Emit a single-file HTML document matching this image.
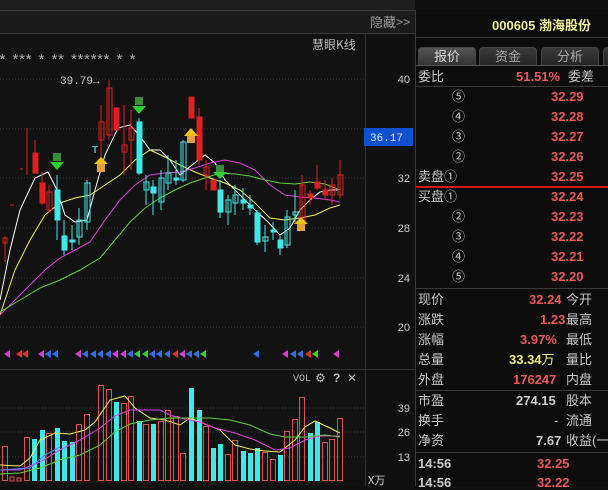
<!DOCTYPE html>
<html><head><meta charset="utf-8"><style>
*{margin:0;padding:0;box-sizing:border-box}
body{width:608px;height:486px;background:#101010;overflow:hidden;position:relative;font-family:"Liberation Sans","Noto Sans CJK SC",sans-serif;}
#chart{position:absolute;left:0;top:0}
#rp{position:absolute;left:415px;top:10px;width:193px;height:476px;background:#0c0c0c;border-left:1px solid #3a3a3a}
.t{position:absolute;font-size:13px;color:#c8c8c8;white-space:nowrap;line-height:14px}
.r{color:#e85a5a;font-weight:bold;font-family:"Liberation Sans",sans-serif}
.n{font-family:"Liberation Sans",sans-serif;}
.tab{position:absolute;top:37px;height:18px;width:58px;border:1px solid #444;border-bottom:none;border-radius:4px 4px 0 0;background:linear-gradient(#3a3a3a,#242424);color:#aaa;font-size:13px;text-align:center;line-height:17px}
.hl{position:absolute;left:0;width:193px;height:1px;background:#3a3a3a}
</style></head><body>
<svg id="chart" width="415" height="486" viewBox="0 0 415 486">
<rect x="0" y="0" width="608" height="10" fill="#1e1e1e"/>
<rect x="0" y="10" width="415" height="23" fill="#1b1b1b"/>
<line x1="0" y1="10.5" x2="415" y2="10.5" stroke="#3a3a3a"/>
<line x1="0" y1="33.5" x2="415" y2="33.5" stroke="#3a3a3a"/>
<rect x="0" y="34" width="365" height="452" fill="#121212"/>
<line x1="365.5" y1="34" x2="365.5" y2="486" stroke="#333"/>
<line x1="0" y1="369.5" x2="415" y2="369.5" stroke="#333"/>
<text x="370" y="27" font-size="13" fill="#9a9a9a" font-family="Noto Sans CJK SC,sans-serif">隐藏&gt;&gt;</text>
<text x="312" y="49" font-size="12" fill="#bbb" font-family="Noto Sans CJK SC,sans-serif">慧眼K线</text>
<text x="-2" y="65" font-size="15" fill="#aaa" font-family="Liberation Mono,monospace" letter-spacing="-2.5">* *** * ** ******  *   *</text>
<g stroke="#3a3a3a" stroke-dasharray="1,2">
<line x1="0" y1="79" x2="365" y2="79"/><line x1="0" y1="129" x2="365" y2="129"/><line x1="0" y1="178" x2="365" y2="178"/><line x1="0" y1="228" x2="365" y2="228"/><line x1="0" y1="278" x2="365" y2="278"/><line x1="0" y1="327" x2="365" y2="327"/>
<line x1="0" y1="408" x2="365" y2="408"/><line x1="0" y1="432" x2="365" y2="432"/><line x1="0" y1="457" x2="365" y2="457"/>
</g>
<g font-size="11" fill="#ccc" font-family="Liberation Sans,sans-serif" text-anchor="end">
<text x="410" y="83">40</text><text x="410" y="182">32</text><text x="410" y="232">28</text><text x="410" y="282">24</text><text x="410" y="331">20</text>
<text x="410" y="412">39</text><text x="410" y="436">26</text><text x="410" y="461">13</text>
</g>
<rect x="364" y="128" width="49" height="18" fill="#1050d0"/>
<text x="370" y="141" font-size="11" fill="#e8e8e8" font-family="Liberation Mono,monospace">36.17</text>
<text x="368" y="484" font-size="11" fill="#ccc" font-family="Noto Sans CJK SC,sans-serif">X万</text>
<text x="60" y="84" font-size="11" fill="#ccc" font-family="Liberation Mono,monospace">39.79→</text>
<g fill="none" stroke-width="1">
<polyline stroke="#ffffff" points="0,300 10,250 20,210 35,178 48,172 57,190 65,215 75,222 87,220 95,190 105,155 118,128 130,125 139,135 150,150 160,150 170,160 180,175 192,165 205,155 215,163 225,180 240,195 255,210 268,222 280,235 290,228 300,210 310,200 320,192 330,190 338,190"/>
<polyline stroke="#f0f060" points="0,315 15,270 30,240 45,215 60,203 75,198 90,195 105,185 120,175 135,160 150,150 165,157 180,165 195,172 210,178 225,183 240,190 255,203 270,218 285,220 300,218 315,215 330,208 340,205"/>
<polyline stroke="#e040e0" points="0,315 15,300 30,285 45,270 60,258 75,250 90,242 105,220 120,200 135,185 150,175 165,173 180,172 195,168 210,163 225,160 240,163 255,170 270,185 285,195 300,197 315,198 330,200 340,202"/>
<polyline stroke="#60d040" points="0,312 20,300 40,288 60,280 80,270 100,258 115,240 130,222 145,208 160,198 175,190 190,183 205,178 220,173 235,174 250,176 265,180 280,183 295,184 310,182 325,184 340,190"/>
</g>
<g stroke-width="1">
<g stroke="#e02020" fill="#e02020">
<line x1="5" y1="236" x2="5" y2="262"/><rect x="3" y="238" width="4" height="5" fill="none"/>
<line x1="27" y1="128" x2="27" y2="175"/><line x1="20" y1="169" x2="23" y2="169"/><line x1="10" y1="205" x2="14" y2="205"/>
<line x1="35" y1="140" x2="35" y2="173"/><rect x="33" y="153" width="5" height="20"/>
<line x1="42" y1="172" x2="42" y2="205"/><rect x="40" y="183" width="5" height="20"/>
<line x1="49" y1="185" x2="49" y2="213"/><rect x="47" y="192" width="5" height="18" fill="none"/>
<line x1="101" y1="105" x2="101" y2="160"/><rect x="99" y="122" width="5" height="18" fill="none"/>
<line x1="109" y1="80" x2="109" y2="140"/><rect x="107" y="88" width="5" height="47" fill="none"/>
<rect x="114" y="108" width="5" height="22"/>
<line x1="124" y1="105" x2="124" y2="175"/><rect x="122" y="145" width="5" height="7" fill="none"/>
<line x1="131" y1="110" x2="131" y2="170"/><rect x="129" y="128" width="5" height="12" fill="none"/>
<rect x="189" y="97" width="5" height="21"/>
<line x1="199" y1="108" x2="199" y2="165"/><rect x="197" y="117" width="5" height="43"/>
<line x1="206" y1="160" x2="206" y2="190"/><rect x="204" y="167" width="5" height="8" fill="none"/>
<rect x="211" y="180" width="5" height="10"/>
<line x1="302" y1="175" x2="302" y2="228"/><rect x="300" y="185" width="5" height="40" fill="none"/>
<line x1="310" y1="190" x2="310" y2="205"/><rect x="308" y="194" width="5" height="4"/>
<line x1="317" y1="165" x2="317" y2="190"/><rect x="315" y="182" width="5" height="6"/>
<line x1="325" y1="180" x2="325" y2="200"/><rect x="323" y="190" width="5" height="5"/>
<line x1="332" y1="178" x2="332" y2="205"/><rect x="330" y="185" width="5" height="10" fill="none"/>
<line x1="340" y1="160" x2="340" y2="198"/><rect x="338" y="175" width="5" height="20" fill="none"/>
</g>
<g stroke="#40e8e8" fill="#40e8e8">
<line x1="57" y1="175" x2="57" y2="240"/><rect x="55" y="190" width="5" height="30"/>
<line x1="64" y1="220" x2="64" y2="255"/><rect x="62" y="236" width="5" height="14"/>
<line x1="72" y1="225" x2="72" y2="250"/><rect x="70" y="240" width="5" height="2"/>
<line x1="79" y1="208" x2="79" y2="245"/><rect x="77" y="220" width="5" height="17" fill="none"/>
<line x1="87" y1="180" x2="87" y2="230"/><rect x="85" y="183" width="5" height="39" fill="none"/>
<line x1="139" y1="118" x2="139" y2="175"/><rect x="137" y="122" width="5" height="51"/>
<line x1="146" y1="175" x2="146" y2="205"/><rect x="144" y="182" width="5" height="8" fill="none"/>
<line x1="153" y1="180" x2="153" y2="215"/><rect x="151" y="187" width="5" height="6"/>
<line x1="161" y1="170" x2="161" y2="210"/><rect x="159" y="178" width="5" height="24" fill="none"/>
<line x1="168" y1="155" x2="168" y2="190"/><rect x="166" y="173" width="5" height="10" fill="none"/>
<line x1="176" y1="160" x2="176" y2="185"/><rect x="174" y="178" width="5" height="2"/>
<line x1="183" y1="140" x2="183" y2="182"/><rect x="181" y="142" width="5" height="38" fill="none"/>
<line x1="220" y1="180" x2="220" y2="218"/><rect x="218" y="190" width="5" height="22"/>
<line x1="228" y1="195" x2="228" y2="225"/><rect x="226" y="200" width="5" height="12" fill="none"/>
<line x1="235" y1="185" x2="235" y2="215"/><rect x="233" y="195" width="5" height="8" fill="none"/>
<line x1="243" y1="188" x2="243" y2="210"/><rect x="241" y="200" width="5" height="3"/>
<line x1="250" y1="195" x2="250" y2="215"/><rect x="248" y="205" width="5" height="3"/>
<line x1="257" y1="210" x2="257" y2="245"/><rect x="255" y="213" width="5" height="29"/>
<line x1="265" y1="225" x2="265" y2="252"/><rect x="263" y="237" width="5" height="4" fill="none"/>
<line x1="273" y1="222" x2="273" y2="240"/><rect x="271" y="230" width="5" height="2"/>
<line x1="280" y1="235" x2="280" y2="255"/><rect x="278" y="240" width="5" height="8"/>
<line x1="287" y1="210" x2="287" y2="248"/><rect x="285" y="217" width="5" height="28" fill="none"/>
<line x1="295" y1="190" x2="295" y2="222"/><rect x="293" y="212" width="5" height="3" fill="none"/>
</g>
</g>
<g font-size="9" font-family="Liberation Sans,sans-serif" font-weight="bold">
<rect x="53" y="153" width="8" height="8" fill="#3a8a3a"/><polygon points="50,162 64,162 57,170" fill="#30d030"/>
<rect x="135" y="97" width="8" height="8" fill="#3a8a3a"/><polygon points="132,106 146,106 139,114" fill="#30d030"/>
<rect x="216" y="165" width="8" height="7" fill="#3a8a3a"/><polygon points="213,172 227,172 220,179" fill="#30d030"/>
<polygon points="94,164 108,164 101,157" fill="#f0c020"/><rect x="97" y="164" width="8" height="8" fill="#e0a040"/>
<polygon points="184,136 198,136 191,128" fill="#f0c020"/><rect x="187" y="136" width="8" height="7" fill="#e0a040"/>
<polygon points="294,224 308,224 301,217" fill="#f0c020"/><rect x="297" y="224" width="8" height="7" fill="#e0a040"/>
<text x="92" y="153" fill="#40c0c0" font-size="10">T</text>
</g>
<g>
<polygon points="4,354 10,350 10,358" fill="#d040d0"/>
<polygon points="16,354 22,350 22,358" fill="#e03030"/><polygon points="22,354 28,350 28,358" fill="#e03030"/>
<polygon points="38,354 44,350 44,358" fill="#d040d0"/><polygon points="45,354 51,350 51,358" fill="#3070e0"/><polygon points="52,354 58,350 58,358" fill="#3070e0"/>
<polygon points="75,354 81,350 81,358" fill="#d040d0"/>
<polygon points="82,354 88,350 88,358" fill="#3070e0"/><polygon points="90,354 96,350 96,358" fill="#3070e0"/><polygon points="97,354 103,350 103,358" fill="#3070e0"/><polygon points="105,354 111,350 111,358" fill="#3070e0"/><polygon points="112,354 118,350 118,358" fill="#d040d0"/><polygon points="120,354 126,350 126,358" fill="#d040d0"/><polygon points="127,354 133,350 133,358" fill="#3070e0"/><polygon points="134,354 140,350 140,358" fill="#30d030"/><polygon points="142,354 148,350 148,358" fill="#30d030"/><polygon points="149,354 155,350 155,358" fill="#3070e0"/><polygon points="156,354 162,350 162,358" fill="#3070e0"/><polygon points="164,354 170,350 170,358" fill="#3070e0"/><polygon points="172,354 178,350 178,358" fill="#e03030"/><polygon points="179,354 185,350 185,358" fill="#d040d0"/><polygon points="186,354 192,350 192,358" fill="#3070e0"/><polygon points="193,354 199,350 199,358" fill="#3070e0"/><polygon points="200,354 206,350 206,358" fill="#30d030"/>
<polygon points="253,354 259,350 259,358" fill="#3070e0"/>
<polygon points="282,354 288,350 288,358" fill="#d040d0"/><polygon points="290,354 296,350 296,358" fill="#3070e0"/><polygon points="297,354 303,350 303,358" fill="#3070e0"/><polygon points="305,354 311,350 311,358" fill="#e03030"/><polygon points="312,354 318,350 318,358" fill="#30d030"/>
<polygon points="333,354 339,350 339,358" fill="#d040d0"/>
</g>
<text x="293" y="381" font-size="10" fill="#bbb" font-family="Liberation Mono,monospace">VOL</text>
<text x="315" y="382" font-size="12" fill="#bbb">⚙</text>
<text x="333" y="382" font-size="12" fill="#bbb" font-weight="bold">?</text>
<text x="347" y="382" font-size="12" fill="#bbb">✕</text>
<g stroke="#e05050" fill="none">
<rect x="2.5" y="446.5" width="5" height="34"/><rect x="10" y="477" width="4" height="4"/><rect x="17" y="478" width="4" height="3"/>
<rect x="24.5" y="437.5" width="5" height="43"/><rect x="46.5" y="433.5" width="5" height="47"/><rect x="76.5" y="424.5" width="5" height="56"/><rect x="84.5" y="414.5" width="5" height="66"/>
<rect x="98.5" y="385.5" width="5" height="95"/><rect x="106.5" y="389.5" width="5" height="91"/><rect x="121.5" y="403.5" width="5" height="77"/><rect x="128.5" y="396.5" width="5" height="84"/>
<rect x="143.5" y="424.5" width="5" height="56"/><rect x="158.5" y="421.5" width="5" height="59"/><rect x="165.5" y="410.5" width="5" height="70"/><rect x="173.5" y="416.5" width="5" height="64"/><rect x="180.5" y="453.5" width="5" height="27"/>
<rect x="203.5" y="426.5" width="5" height="54"/><rect x="225.5" y="454.5" width="5" height="26"/><rect x="232.5" y="440.5" width="5" height="40"/>
<rect x="262.5" y="452.5" width="5" height="28"/><rect x="270.5" y="459.5" width="5" height="21"/><rect x="284.5" y="431.5" width="5" height="49"/><rect x="292.5" y="419.5" width="5" height="61"/><rect x="299.5" y="397.5" width="5" height="83"/>
<rect x="322.5" y="442.5" width="5" height="38"/><rect x="329.5" y="439.5" width="5" height="41"/><rect x="337.5" y="418.5" width="5" height="62"/>
</g>
<g fill="#40e8e8">
<rect x="32" y="439" width="5" height="42"/><rect x="40" y="430" width="5" height="51"/><rect x="55" y="428" width="5" height="53"/><rect x="62" y="441" width="5" height="40"/><rect x="70" y="442" width="5" height="39"/>
<rect x="114" y="402" width="5" height="79"/><rect x="137" y="421" width="5" height="60"/><rect x="151" y="424" width="5" height="57"/>
<rect x="189" y="388" width="5" height="93"/><rect x="197" y="410" width="5" height="71"/><rect x="211" y="448" width="5" height="33"/><rect x="218" y="444" width="5" height="37"/>
<rect x="241" y="451" width="5" height="30"/><rect x="248" y="453" width="5" height="28"/><rect x="255" y="448" width="5" height="33"/><rect x="278" y="455" width="5" height="26"/>
<rect x="308" y="433" width="5" height="48"/><rect x="315" y="422" width="5" height="59"/>
</g>
<g fill="none">
<polyline stroke="#f0f060" points="0,465 20,466 30,458 40,440 55,433 70,434 85,430 95,422 110,400 125,396 135,408 150,418 165,420 180,425 190,418 205,424 220,430 235,445 250,449 265,451 280,452 295,440 305,427 315,421 330,428 340,433"/>
<polyline stroke="#e040e0" points="0,470 20,470 40,462 60,450 80,440 100,428 115,416 130,410 145,410 160,410 170,415 185,419 200,422 215,428 235,433 255,440 275,450 290,448 305,440 320,436 340,436"/>
<polyline stroke="#60d040" points="0,474 20,473 40,468 60,460 80,455 100,445 115,432 130,424 150,420 170,418 190,418 210,418 230,420 250,425 270,434 285,437 305,437 325,435 340,437"/>
<polyline stroke="#5080ff" points="0,470 30,468 45,455 60,447"/>
</g>
</svg>
<div id="rp">
<div class="t n" style="left:76px;top:8px;color:#f0f0a0;font-weight:bold;font-size:13px">000605 <span style="font-family:'Noto Sans CJK SC',sans-serif">渤海股份</span></div>
<div class="hl" style="top:27px"></div>
<div class="tab" style="left:2px;background:linear-gradient(#555,#333);color:#ddd">报价</div>
<div class="tab" style="left:63px">资金</div>
<div class="tab" style="left:125px">分析</div>
<div class="tab" style="left:187px"></div>
<div class="hl" style="top:55px;background:#555"></div>
<div class="t" style="left:2px;top:60px">委比</div>
<div class="t r" style="left:100px;top:60px">51.51%</div><div class="t" style="left:152px;top:60px">委差</div>
<div class="hl" style="top:76px"></div>
<div class="t" style="left:36px;top:80px">⑤</div><div class="t r" style="left:135px;top:80px">32.29</div>
<div class="t" style="left:36px;top:100px">④</div><div class="t r" style="left:135px;top:100px">32.28</div>
<div class="t" style="left:36px;top:120px">③</div><div class="t r" style="left:135px;top:120px">32.27</div>
<div class="t" style="left:36px;top:140px">②</div><div class="t r" style="left:135px;top:140px">32.26</div>
<div class="t" style="left:2px;top:160px">卖盘①</div><div class="t r" style="left:135px;top:160px">32.25</div>
<div style="position:absolute;left:0;top:176px;width:193px;height:2px;background:#d01818"></div>
<div class="t" style="left:2px;top:180px">买盘①</div><div class="t r" style="left:135px;top:180px">32.24</div>
<div class="t" style="left:36px;top:200px">②</div><div class="t r" style="left:135px;top:200px">32.23</div>
<div class="t" style="left:36px;top:220px">③</div><div class="t r" style="left:135px;top:220px">32.22</div>
<div class="t" style="left:36px;top:240px">④</div><div class="t r" style="left:135px;top:240px">32.21</div>
<div class="t" style="left:36px;top:260px">⑤</div><div class="t r" style="left:135px;top:260px">32.20</div>
<div class="hl" style="top:278px"></div>
<div class="t" style="left:2px;top:283px">现价</div><div class="t r" style="left:113px;top:283px">32.24</div><div class="t" style="left:150px;top:283px">今开</div>
<div class="t" style="left:2px;top:303px">涨跌</div><div class="t r" style="left:124px;top:303px">1.23</div><div class="t" style="left:150px;top:303px">最高</div>
<div class="t" style="left:2px;top:323px">涨幅</div><div class="t r" style="left:104px;top:323px">3.97%</div><div class="t" style="left:150px;top:323px">最低</div>
<div class="t" style="left:2px;top:343px">总量</div><div class="t" style="left:93px;top:343px;color:#f0f080;font-weight:bold">33.34<span style="font-weight:normal">万</span></div><div class="t" style="left:150px;top:343px">量比</div>
<div class="t" style="left:2px;top:363px">外盘</div><div class="t r" style="left:97px;top:363px">176247</div><div class="t" style="left:150px;top:363px">内盘</div>
<div class="hl" style="top:380px"></div>
<div class="t" style="left:2px;top:384px">市盈</div><div class="t n" style="left:100px;top:384px;font-weight:bold;color:#ccc">274.15</div><div class="t" style="left:150px;top:384px">股本</div>
<div class="t" style="left:2px;top:404px">换手</div><div class="t" style="left:138px;top:404px">-</div><div class="t" style="left:150px;top:404px">流通</div>
<div class="t" style="left:2px;top:424px">净资</div><div class="t n" style="left:120px;top:424px;font-weight:bold;color:#ccc">7.67</div><div class="t" style="left:150px;top:424px">收益(一</div>
<div class="hl" style="top:442px"></div>
<div class="t n" style="left:2px;top:447px;font-weight:bold;color:#ccc">14:56</div><div class="t r" style="left:121px;top:447px">32.25</div>
<div class="t n" style="left:2px;top:466px;font-weight:bold;color:#ccc">14:56</div><div class="t r" style="left:121px;top:466px">32.22</div>
</div>
</body></html>
